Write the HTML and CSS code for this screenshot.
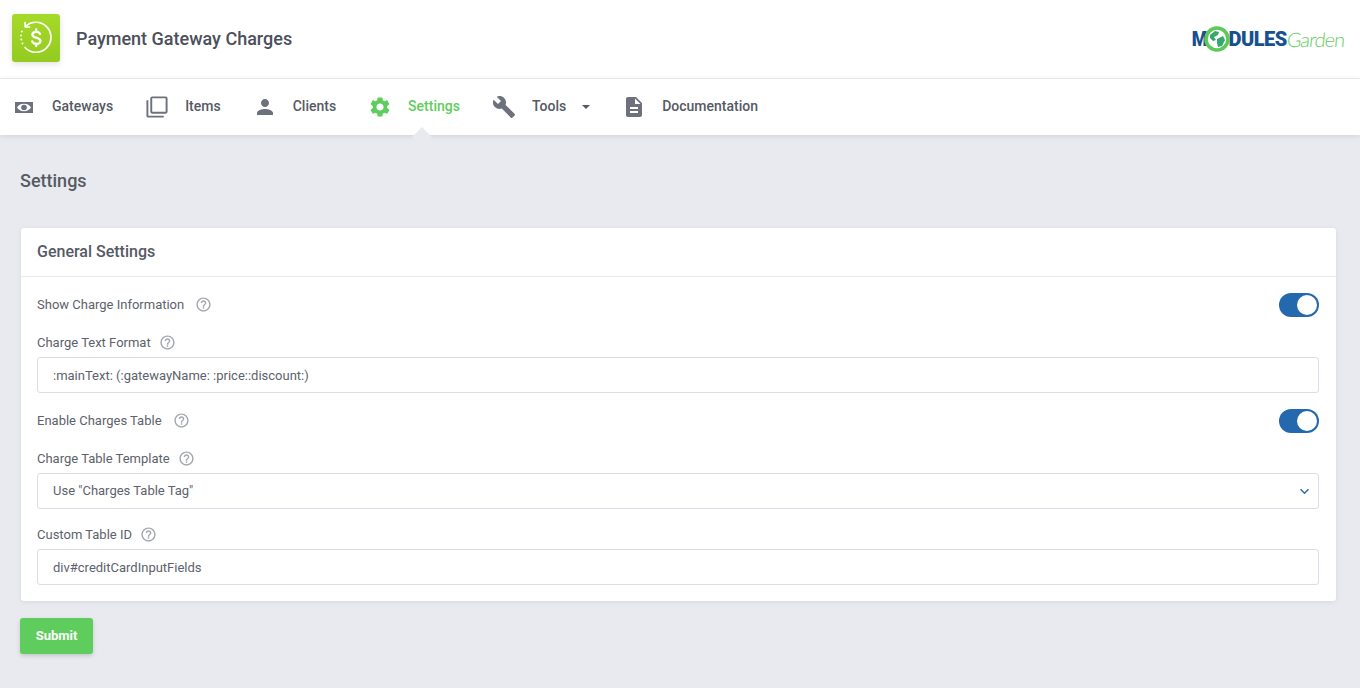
FILE: index.html
```html
<!DOCTYPE html>
<html lang="en">
<head>
<meta charset="utf-8">
<title>Payment Gateway Charges</title>
<link rel="stylesheet" href="styles.css">
</head>
<body>
<header class="topbar">
  <div class="brand">
    <div class="app-icon">
      <svg viewBox="0 0 48 48" width="48" height="48" fill="none" stroke="#fff" stroke-linecap="round">
        <path d="M13.500 12.500A15 15 0 1 1 13 33.500" stroke-width="1.700"/>
        <path d="M13 8.500l.2 4.300 4.300.2" stroke-width="1.700" stroke-linejoin="round"/>
        <path d="M9.800 17.500v.01M9 21.500v.01M9.300 25.500v.01M10.500 29.500v.01" stroke-width="1.900"/>
        <path d="M28 20c-.5-1.500-1.900-2.200-3.800-2.200-2.200 0-3.800 1.100-3.800 2.900 0 4.100 8.100 2 8.100 6.100 0 1.900-1.700 3-4 3-2.200 0-3.900-.9-4.300-2.500M24.200 15.500v2.300M24.200 29.800v2.300" stroke-width="2.300"/>
      </svg>
    </div>
    <div class="app-name">Payment Gateway Charges</div>
  </div>
  <div class="logo">
    <span class="logo-bold logo-m">M</span>
    <svg class="logo-globe" viewBox="0 0 26 26" width="26" height="26">
      <circle cx="13" cy="13" r="11" fill="#fff" stroke="#5cc95a" stroke-width="3.600"/>
      <path d="M6 9l5-4 4 1-1 3-4 2 2 3-3 1-3-3zM13 13l6-3 2 4-3 6-4 1-1-4z" fill="#35a86a"/>
    </svg>
    <span class="logo-bold">DULES</span><span class="logo-thin">Garden</span>
  </div>
</header>

<nav class="nav">
  <a class="nav-item"><svg class="nav-icon" viewBox="0 0 24 24"><path fill-rule="evenodd" d="M3 7h18v11H3zM12 8.800c-3.300 0-6 1.700-7 3.700 1 2 3.700 3.700 7 3.700s6-1.700 7-3.700c-1-2-3.700-3.700-7-3.700z"/><circle cx="12" cy="12.500" r="2.800"/></svg><span class="nav-label">Gateways</span></a>
  <a class="nav-item"><svg class="nav-icon" viewBox="-.5 -.5 25 25"><path d="M3 5H1v16c0 1.100.9 2 2 2h16v-2H3V5zm18-4H7c-1.100 0-2 .9-2 2v14c0 1.100.9 2 2 2h14c1.100 0 2-.9 2-2V3c0-1.100-.9-2-2-2zm0 16H7V3h14v14z"/></svg><span class="nav-label">Items</span></a>
  <a class="nav-item"><svg class="nav-icon" viewBox="0 0 24 24"><path d="M12 12c2.210 0 4-1.790 4-4s-1.790-4-4-4-4 1.790-4 4 1.790 4 4 4zm0 2c-2.670 0-8 1.340-8 4v2h16v-2c0-2.660-5.330-4-8-4z"/></svg><span class="nav-label">Clients</span></a>
  <a class="nav-item active"><svg class="nav-icon" viewBox="0 0 24 24"><path d="M19.140 12.940c.04-.3.06-.61.06-.94 0-.32-.02-.64-.07-.94l2.030-1.580c.18-.14.23-.41.12-.61l-1.920-3.320c-.12-.22-.37-.29-.59-.22l-2.390.96c-.5-.38-1.030-.7-1.620-.94l-.36-2.540c-.04-.24-.24-.41-.48-.41h-3.840c-.24 0-.43.17-.47.41l-.36 2.540c-.59.24-1.130.57-1.620.94l-2.390-.96c-.22-.08-.47 0-.59.22L2.740 8.870c-.12.21-.08.47.12.61l2.030 1.580c-.05.3-.09.63-.09.94s.02.64.07.94l-2.030 1.580c-.18.14-.23.41-.12.61l1.920 3.320c.12.22.37.29.59.22l2.390-.96c.5.38 1.030.7 1.620.94l.36 2.540c.05.24.24.41.48.41h3.840c.24 0 .44-.17.47-.41l.36-2.540c.59-.24 1.130-.56 1.620-.94l2.390.96c.22.08.47 0 .59-.22l1.920-3.320c.12-.22.07-.47-.12-.61l-2.010-1.580zM12 15.600c-1.980 0-3.600-1.620-3.600-3.600s1.620-3.600 3.600-3.600 3.600 1.620 3.600 3.600-1.620 3.600-3.600 3.600z"/></svg><span class="nav-label">Settings</span></a>
  <a class="nav-item"><svg class="nav-icon" viewBox="0 0 24 24"><path d="M22.700 19l-9.100-9.100c.9-2.300.4-5-1.500-6.900-2-2-5-2.400-7.400-1.300L9 6 6 9 1.600 4.700C.4 7.100.9 10.100 2.900 12.100c1.900 1.900 4.600 2.400 6.900 1.500l9.100 9.100c.4.4 1 .4 1.400 0l2.300-2.300c.5-.4.5-1.100.1-1.400z"/></svg><span class="nav-label">Tools</span><i class="caret"></i></a>
  <a class="nav-item"><svg class="nav-icon" viewBox="0 0 24 24"><path d="M14 2H6c-1.100 0-1.990.9-1.990 2L4 20c0 1.100.89 2 1.990 2H18c1.100 0 2-.9 2-2V8l-6-6zm2 16H8v-2h8v2zm0-4H8v-2h8v2zm-3-5V3.500L18.500 9H13z"/></svg><span class="nav-label">Documentation</span></a>
</nav>

<main class="content">
  <h1 class="page-title">Settings</h1>
  <section class="card">
    <h2 class="card-title">General Settings</h2>
    <div class="card-body">
      <div class="row-switch">
        <label class="field-label">Show Charge Information<svg class="help" viewBox="0 0 24 24"><path d="M11 18h2v-2h-2v2zm1-16C6.480 2 2 6.480 2 12s4.480 10 10 10 10-4.480 10-10S17.520 2 12 2zm0 18c-4.410 0-8-3.590-8-8s3.590-8 8-8 8 3.590 8 8-3.590 8-8 8zm0-14c-2.210 0-4 1.790-4 4h2c0-1.100.9-2 2-2s2 .9 2 2c0 2-3 1.750-3 5h2c0-2.250 3-2.500 3-5 0-2.210-1.790-4-4-4z"/></svg></label>
        <span class="switch"><span class="knob"></span></span>
      </div>
      <div class="field">
        <label class="field-label short">Charge Text Format<svg class="help" viewBox="0 0 24 24"><path d="M11 18h2v-2h-2v2zm1-16C6.480 2 2 6.480 2 12s4.480 10 10 10 10-4.480 10-10S17.520 2 12 2zm0 18c-4.410 0-8-3.590-8-8s3.590-8 8-8 8 3.590 8 8-3.590 8-8 8zm0-14c-2.210 0-4 1.790-4 4h2c0-1.100.9-2 2-2s2 .9 2 2c0 2-3 1.750-3 5h2c0-2.250 3-2.500 3-5 0-2.210-1.790-4-4-4z"/></svg></label>
        <div class="input">:mainText: (:gatewayName: :price::discount:)</div>
      </div>
      <div class="row-switch">
        <label class="field-label">Enable Charges Table<svg class="help" viewBox="0 0 24 24"><path d="M11 18h2v-2h-2v2zm1-16C6.480 2 2 6.480 2 12s4.480 10 10 10 10-4.480 10-10S17.520 2 12 2zm0 18c-4.410 0-8-3.590-8-8s3.590-8 8-8 8 3.590 8 8-3.590 8-8 8zm0-14c-2.210 0-4 1.790-4 4h2c0-1.100.9-2 2-2s2 .9 2 2c0 2-3 1.750-3 5h2c0-2.250 3-2.500 3-5 0-2.210-1.790-4-4-4z"/></svg></label>
        <span class="switch"><span class="knob"></span></span>
      </div>
      <div class="field">
        <label class="field-label short">Charge Table Template<svg class="help" viewBox="0 0 24 24"><path d="M11 18h2v-2h-2v2zm1-16C6.480 2 2 6.480 2 12s4.480 10 10 10 10-4.480 10-10S17.520 2 12 2zm0 18c-4.410 0-8-3.590-8-8s3.590-8 8-8 8 3.590 8 8-3.590 8-8 8zm0-14c-2.210 0-4 1.790-4 4h2c0-1.100.9-2 2-2s2 .9 2 2c0 2-3 1.750-3 5h2c0-2.250 3-2.500 3-5 0-2.210-1.790-4-4-4z"/></svg></label>
        <div class="input select">Use "Charges Table Tag"<svg class="chevron" viewBox="0 0 12 8" width="11" height="7"><path d="M1.500 1.500L6 6l4.500-4.500" fill="none" stroke="#2a6db0" stroke-width="1.700"/></svg></div>
      </div>
      <div class="field">
        <label class="field-label short">Custom Table ID<svg class="help" viewBox="0 0 24 24"><path d="M11 18h2v-2h-2v2zm1-16C6.480 2 2 6.480 2 12s4.480 10 10 10 10-4.480 10-10S17.520 2 12 2zm0 18c-4.410 0-8-3.590-8-8s3.590-8 8-8 8 3.590 8 8-3.590 8-8 8zm0-14c-2.210 0-4 1.790-4 4h2c0-1.100.9-2 2-2s2 .9 2 2c0 2-3 1.750-3 5h2c0-2.250 3-2.500 3-5 0-2.210-1.790-4-4-4z"/></svg></label>
        <div class="input">div#creditCardInputFields</div>
      </div>
    </div>
  </section>
  <button class="submit"><span class="submit-label">Submit</span></button>
</main>
</body>
</html>
```
FILE: styles.css
```css
* { box-sizing: border-box; }
html, body { margin: 0; height: 100%; }
body {
  background: #e9eaef;
  font-family: Roboto, "Liberation Sans", sans-serif;
  color: #555a64;
  overflow: hidden;
}
.topbar {
  height: 79px;
  background: #fff;
  border-bottom: 1px solid #eeeff2;
  display: flex;
  align-items: center;
  justify-content: space-between;
  padding: 0 16px 0 12px;
}
.brand { display: flex; align-items: center; gap: 16px; margin-top: -2px; }
.app-icon {
  width: 48px;
  height: 48px;
  border-radius: 3px;
  background: linear-gradient(180deg, #a6da2a, #93cb21);
  box-shadow: 0 2px 6px rgba(0, 0, 0, .12);
}
.app-icon svg { display: block; }
.app-name { font-size: 18px; font-weight: 500; color: #4b505b; }
.logo { display: flex; align-items: center; }
.logo-bold { font-size: 20px; font-weight: 900; color: #17508f; letter-spacing: -.5px; }
.logo-m { display: inline-block; transform: scaleX(.9); transform-origin: right center; }
.logo-globe { margin: 0 -2px 0 -3px; position: relative; }
.logo-thin { display: inline-block; transform: skewX(-6deg); font-size: 20px; font-weight: 300; color: #66cd64; letter-spacing: -1px; font-family: Lato, sans-serif; }
.nav {
  height: 56px;
  background: #fff;
  display: flex;
  align-items: center;
  gap: 32px;
  padding-left: 12px;
  box-shadow: 0 1px 6px rgba(0, 0, 0, .1);
  position: relative;
}
.nav-item {
  display: flex;
  align-items: center;
  gap: 16px;
  font-size: 14px;
  font-weight: 500;
  color: #555a64;
  position: relative;
}
.nav-label { padding-bottom: 2px; }
.nav-icon { width: 24px; height: 24px; fill: #6c717c; display: block; }
.nav-item.active { color: #5fcd5d; }
.nav-item.active .nav-icon { fill: #5fcd5d; }
.nav-item.active::after {
  content: "";
  position: absolute;
  left: 47px;
  top: 35px;
  width: 14px;
  height: 14px;
  background: #e9eaef;
  transform: rotate(45deg);
}
.caret {
  width: 0;
  height: 0;
  margin-bottom: 1px;
  border-left: 4.500px solid transparent;
  border-right: 4.500px solid transparent;
  border-top: 4.500px solid #555a64;
}
.content { padding: 0 24px 0 20px; }
.page-title { margin: 0; font-size: 18px; font-weight: 500; line-height: 24px; padding-top: 34px; height: 93px; color: #555a64; }
.card {
  margin-left: 1px;
  background: #fff;
  border-radius: 3px;
  box-shadow: 0 1px 5px rgba(0, 0, 0, .08);
}
.card-title {
  margin: 0;
  height: 49px;
  padding: 0 16px;
  font-size: 16px;
  font-weight: 500;
  line-height: 47px;
  color: #555a64;
  border-bottom: 1px solid #e9eaef;
}
.card-body { padding: 16px 17px 16px 16px; display: flex; flex-direction: column; gap: 16px; }
.row-switch { display: flex; align-items: center; justify-content: space-between; height: 24px; }
.field { display: flex; flex-direction: column; gap: 5px; }
.field-label { font-size: 13px; line-height: 18px; color: #5d626c; display: flex; align-items: center; }
.field-label.short { margin-top: 1px; }
.help { width: 17px; height: 17px; fill: #a2a5ad; margin: 0 0 1px 11px; }
.field-label.short .help { margin-left: 8px; }
.switch { width: 40px; height: 24px; border-radius: 12px; background: #2468ae; position: relative; display: block; }
.knob { position: absolute; right: 2px; top: 2px; width: 20px; height: 20px; border-radius: 50%; background: #fff; }
.input {
  height: 36px;
  border: 1px solid #dcdde6;
  border-radius: 3px;
  padding: 0 15px;
  font-size: 13px;
  line-height: 36px;
  color: #5d626c;
  background: #fff;
}
.select { display: flex; justify-content: space-between; align-items: center; padding-right: 8px; line-height: 34px; }
.chevron { display: block; margin-top: 1px; }
.submit {
  display: block;
  margin-top: 17px;
  width: 73px;
  height: 36px;
  border: 0;
  border-radius: 3px;
  background: #5fcd5d;
  color: #fff;
  font-family: Roboto, sans-serif;
  font-size: 13px;
  font-weight: 700;
  box-shadow: 0 2px 4px rgba(0, 0, 0, .15);
  padding: 0 0 2px;
}
.submit-label { display: block; }
```
